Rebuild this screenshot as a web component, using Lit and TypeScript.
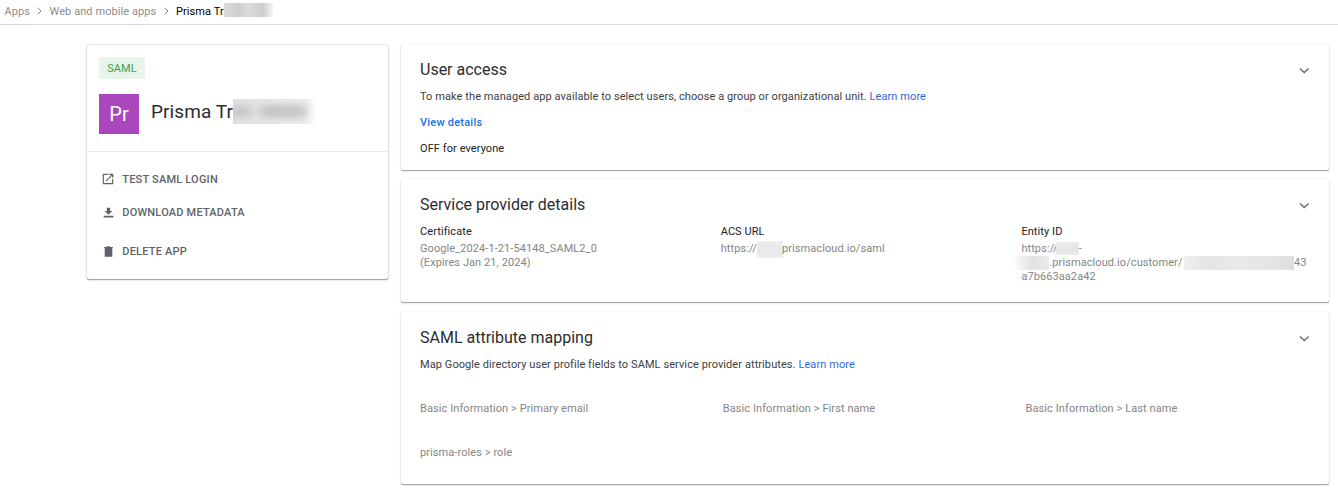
import { LitElement, html, css, svg } from "lit";
import { customElement, property } from "lit/decorators.js";

@customElement("detail-card")
class DetailCard extends LitElement {
  @property() heading = "";

  static styles = css`
    :host {
      display: block;
      box-sizing: border-box;
      background: #fff;
      border-radius: 2px;
      box-shadow: 0 1px 0 0 #a4a5a6, 0 1px 2px 0 rgba(60, 64, 67, 0.28), 0 0 1px 0 rgba(60, 64, 67, 0.2);
      padding: 12px 19px 0;
    }
    .head {
      display: flex;
      align-items: flex-start;
      justify-content: space-between;
      height: 28px;
    }
    h2 {
      margin: 0;
      font-size: 16px;
      line-height: 27px;
      font-weight: 400;
      letter-spacing: 0;
      color: #2c2d30;
    }
    .chevron {
      display: block;
      width: 12px;
      height: 8px;
      margin-top: 11px;
    }
  `;

  render() {
    return html`
      <div class="head">
        <h2>${this.heading}</h2>
        <svg class="chevron" viewBox="0 0 12 8">
          <path d="M2 1.500 L6.300 5.500 L10.600 1.500" fill="none" stroke="#696c70" stroke-width="1.5" />
        </svg>
      </div>
      <slot></slot>
    `;
  }
}

const openIcon = svg`<path d="M19 19H5V5h7V3H3v18h18v-9h-2v7zM14 3v2h3.59l-9.83 9.83 1.41 1.41L19 6.41V10h2V3h-7z"/>`;
const downloadIcon = svg`<path d="M19 9h-4V3H9v6H5l7 7 7-7zM3 18v3h18v-3H3z"/>`;
const trashIcon = svg`<path d="M5 21.500h14V6H5v15.500zM20 3.500h-4.500l-1-1h-5l-1 1H4V6h16V3.500z"/>`;

@customElement("app-root")
class AppRoot extends LitElement {
  static styles = css`
    :host {
      display: block;
      height: 493px;
      overflow: hidden;
      background: #fff;
      font-family: Roboto, "Liberation Sans", sans-serif;
      font-size: 11px;
      letter-spacing: 0.08px;
      color: #3c4043;
    }
    .crumbs {
      display: flex;
      align-items: center;
      box-sizing: border-box;
      height: 25px;
      padding: 0 0 0 4.400px;
      border-bottom: 1px solid #dadce0;
      color: #8c8c8c;
      line-height: 14px;
      white-space: nowrap;
    }
    .sep {
      width: 5px;
      height: 8px;
      margin: -2px 7.200px 0 7.400px;
    }
    .current { color: #000; }
    .smudge {
      display: inline-block;
      flex: none;
      vertical-align: top;
    }
    .smudge.crumb {
      width: 49px;
      height: 14px;
      margin-top: -4px;
      background: linear-gradient(90deg, #dcdcdc, #cdcdcd 30%, #dcdcdc 48%, #cecece 80%, #f5f5f5);
    }
    .smudge.name {
      position: relative;
      overflow: hidden;
      width: 83px;
      height: 25px;
      background: linear-gradient(90deg, #e4e4e4, #ebebeb 70%, #eee 88%, #fff);
    }
    .smudge.name i {
      position: absolute;
      top: 7px;
      height: 11px;
      background: #b4b4b4;
      filter: blur(5px);
    }
    .smudge.name .a { left: -3px; width: 22px; opacity: 0.75; }
    .smudge.name .b { left: 27px; width: 46px; opacity: 0.85; }
    .smudge.host { width: 26px; height: 17px; margin: -1px -1px -3px 0; background: linear-gradient(180deg, #eee, #e8e8e8 60%, #eee); }
    .smudge.short { width: 23px; height: 13px; margin: 0 0 0 -2px; background: linear-gradient(180deg, #ededed, #e5e5e5 60%, #ebebeb); }
    .smudge.lead { width: 34px; height: 14px; margin: 0 0 0 -6px; background: linear-gradient(90deg, #fafafa, #e2e2e2 50%, #e9e9e9); }
    .smudge.long { width: 110px; height: 14px; margin: 0 0 0 1.500px; background: linear-gradient(90deg, #efefef, #e5e5e5 20%, #e9e9e9 50%, #e4e4e4 85%, #ddd); }
    .page {
      display: grid;
      grid-template-columns: 301px 928px;
      column-gap: 13px;
      align-items: start;
      padding: 19px 0 0 87px;
    }
    .side {
      margin-top: 1px;
      height: 234px;
      border-radius: 2px;
      box-shadow: 0 1px 0 0 #a4a5a6, 0 1px 2px 0 rgba(60, 64, 67, 0.28), 0 0 2px 0 rgba(60, 64, 67, 0.35);
    }
    .summary {
      box-sizing: border-box;
      height: 107px;
      padding: 12px 12px 0;
      border-bottom: 1px solid #e8eaed;
    }
    .tag {
      display: block;
      width: 46px;
      height: 22px;
      border-radius: 2px;
      background: #e6f4ea;
      color: #43a047;
      line-height: 23px;
      text-align: center;
    }
    .app {
      display: flex;
      margin-top: 15px;
    }
    .avatar {
      width: 40px;
      height: 40px;
      background: #ab47bc;
      color: #fff;
      font-size: 20px;
      line-height: 41px;
      text-align: center;
    }
    .title {
      display: flex;
      align-items: flex-start;
      margin: 5px 0 0 12px;
      font-size: 19px;
      line-height: 25px;
      color: #2c2d30;
      white-space: nowrap;
    }
    .actions { padding: 11px 15px 0; }
    .action {
      display: flex;
      align-items: center;
      gap: 7.300px;
      height: 33px;
      font-weight: 500;
      letter-spacing: 0.2px;
      color: #5f6368;
    }
    .action.last { margin-top: 6px; }
    .action svg { width: 13px; height: 13px; margin-top: -1px; fill: #5f6368; }
    .action svg.open { width: 14px; height: 14px; margin: -1px 0 0 -1px; }
    .cards { display: grid; grid-template-rows: 126px 123px 172px; row-gap: 9px; }
    .mapping { margin: 1px 0 -1px; }
    p { margin: 0; line-height: 26px; white-space: nowrap; }
    a { color: #3367d6; text-decoration: none; }
    .view { color: #1a73e8; font-weight: 500; letter-spacing: 0.22px; }
    .dark { color: #202124; }
    .provider {
      display: grid;
      grid-template-columns: 300.700px 300.700px 1fr;
      margin-top: 6px;
      line-height: 14px;
      color: #858585;
      white-space: nowrap;
    }
    .provider dt { color: #202124; margin-bottom: 3px; }
    .provider dl, .provider dd { margin: 0; }
    .line { display: flex; align-items: flex-start; height: 14px; }
    .fields {
      display: grid;
      grid-template-columns: 302.800px 302.800px 1fr;
      grid-auto-rows: 44px;
      align-items: center;
      margin-top: 8px;
      color: #858585;
    }
  `;

  separator() {
    return html`<svg class="sep" viewBox="0 0 5 8"><path d="M.7 .8 4 4 .7 7.200" fill="none" stroke="#858585" stroke-width="1"/></svg>`;
  }

  render() {
    return html`
      <nav class="crumbs">
        <span>Apps</span>${this.separator()}<span>Web and mobile apps</span>${this.separator()}<span class="current">Prisma Tr</span><span class="smudge crumb"></span>
      </nav>
      <main class="page">
        <aside class="side">
          <div class="summary">
            <span class="tag">SAML</span>
            <div class="app">
              <div class="avatar">Pr</div>
              <div class="title"><span>Prisma Tr</span><span class="smudge name"><i class="a"></i><i class="b"></i></span></div>
            </div>
          </div>
          <div class="actions">
            <div class="action"><svg class="open" viewBox="0 0 24 24">${openIcon}</svg><span>TEST SAML LOGIN</span></div>
            <div class="action"><svg viewBox="0 0 24 24">${downloadIcon}</svg><span>DOWNLOAD METADATA</span></div>
            <div class="action last"><svg viewBox="0 0 24 24">${trashIcon}</svg><span>DELETE APP</span></div>
          </div>
        </aside>
        <section class="cards">
          <detail-card heading="User access">
            <p class="desc">To make the managed app available to select users, choose a group or organizational unit. <a>Learn more</a></p>
            <p class="view">View details</p>
            <p class="dark">OFF for everyone</p>
          </detail-card>
          <detail-card heading="Service provider details">
            <div class="provider">
              <dl><dt>Certificate</dt><dd>Google_2024-1-21-54148_SAML2_0<br />(Expires Jan 21, 2024)</dd></dl>
              <dl><dt>ACS URL</dt><dd class="line"><span>https://</span><span class="smudge host"></span><span>prismacloud.io/saml</span></dd></dl>
              <dl>
                <dt>Entity ID</dt>
                <dd class="line"><span>https://</span><span class="smudge short"></span><span>-</span></dd>
                <dd class="line"><span class="smudge lead"></span><span>.prismacloud.io/customer/</span><span class="smudge long"></span><span>43</span></dd>
                <dd class="line">a7b663aa2a42</dd>
              </dl>
            </div>
          </detail-card>
          <detail-card class="mapping" heading="SAML attribute mapping">
            <p class="desc">Map Google directory user profile fields to SAML service provider attributes. <a>Learn more</a></p>
            <div class="fields">
              <span>Basic Information &gt; Primary email</span>
              <span>Basic Information &gt; First name</span>
              <span>Basic Information &gt; Last name</span>
              <span>prisma-roles &gt; role</span>
            </div>
          </detail-card>
        </section>
      </main>
    `;
  }
}
